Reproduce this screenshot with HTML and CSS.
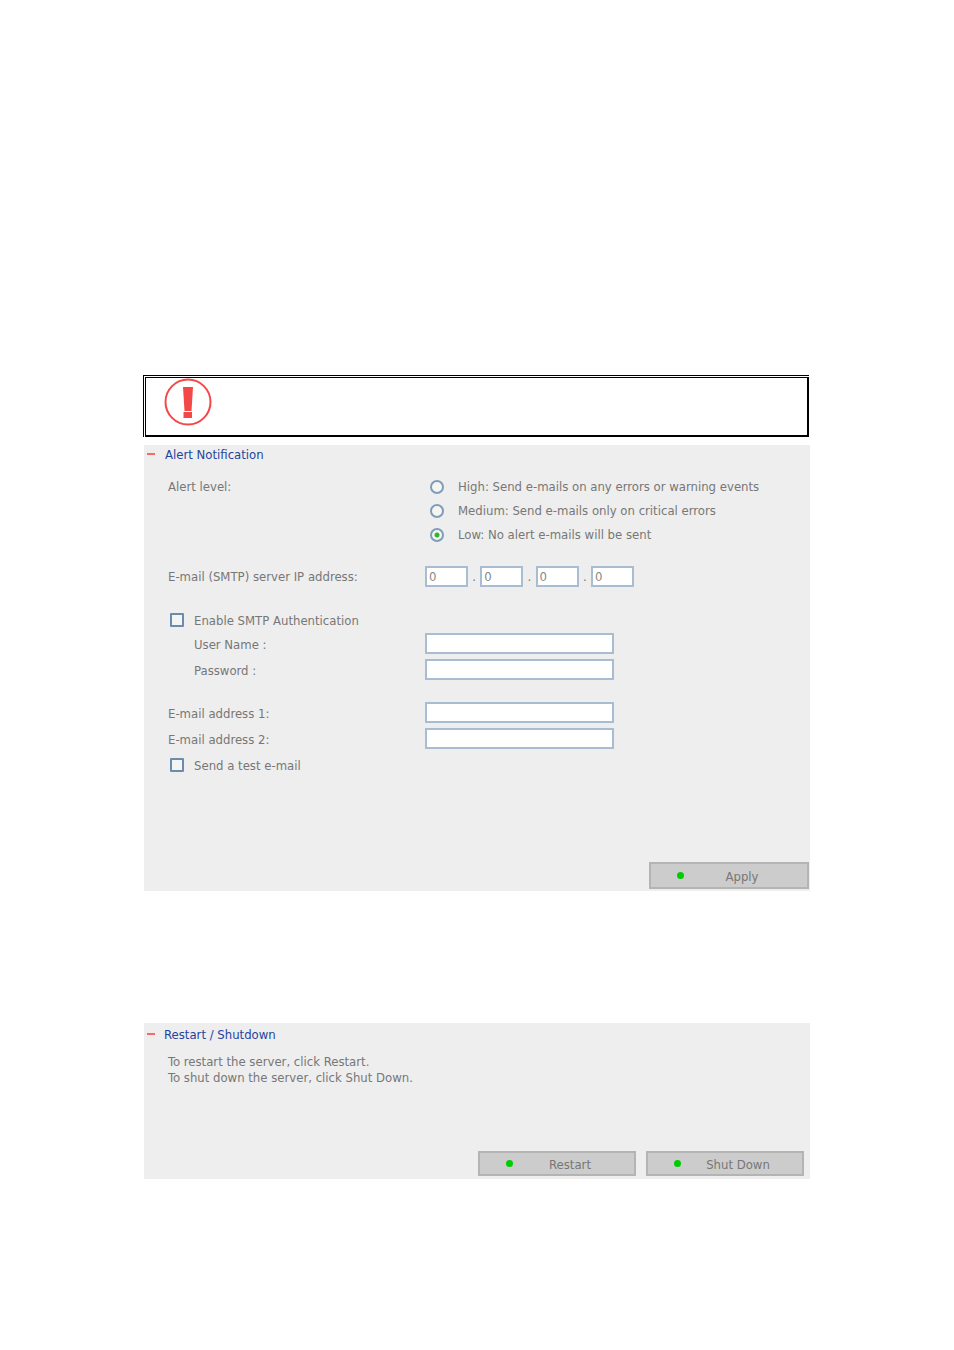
FILE: index.html
```html
<!DOCTYPE html>
<html lang="en">
<head>
    <meta charset="UTF-8">
    <title>Alert Notification</title>
    <link rel="stylesheet" href="styles.css">
</head>
<body>
    <div class="warning-box">
        <div class="warning-inner">
            <svg class="warning-icon" width="48" height="48" viewBox="0 0 48 48">
                <circle cx="24" cy="24" r="22.5" fill="none" stroke="#f44848" stroke-width="2"/>
                <path d="M19 9 H29 L27.5 33 H20.5 Z" fill="#f44848"/>
                <rect x="19.5" y="34" width="8.5" height="6" fill="#f44848"/>
            </svg>
        </div>
    </div>

    <section class="panel panel-alert">
        <h2 class="panel-title"><span class="minus"></span>Alert Notification</h2>

        <div class="row row-level">
            <div class="label">Alert level:</div>
            <div class="radio-list">
                <label class="radio-item"><input type="radio" name="level">High: Send e-mails on any errors or warning events</label>
                <label class="radio-item"><input type="radio" name="level">Medium: Send e-mails only on critical errors</label>
                <label class="radio-item"><input type="radio" name="level" checked>Low: No alert e-mails will be sent</label>
            </div>
        </div>

        <div class="row row-ip">
            <div class="label">E-mail (SMTP) server IP address:</div>
            <div class="ip-fields">
                <input type="text" class="ip-input" value="0"><span class="dot">.</span>
                <input type="text" class="ip-input" value="0"><span class="dot">.</span>
                <input type="text" class="ip-input" value="0"><span class="dot">.</span>
                <input type="text" class="ip-input" value="0">
            </div>
        </div>

        <label class="check-item check-smtp"><input type="checkbox">Enable SMTP Authentication</label>
        <div class="row row-field row-user">
            <div class="label label-sub">User Name :</div>
            <input type="text" class="text-input">
        </div>
        <div class="row row-field">
            <div class="label label-sub">Password :</div>
            <input type="text" class="text-input">
        </div>

        <div class="row row-field row-mail">
            <div class="label">E-mail address 1:</div>
            <input type="text" class="text-input">
        </div>
        <div class="row row-field">
            <div class="label">E-mail address 2:</div>
            <input type="text" class="text-input">
        </div>
        <label class="check-item check-test"><input type="checkbox">Send a test e-mail</label>

        <div class="panel-actions actions-apply">
            <button class="action-button button-wide"><span class="led"></span><span class="button-text">Apply</span></button>
        </div>
    </section>

    <section class="panel panel-restart">
        <h2 class="panel-title title-restart"><span class="minus"></span>Restart / Shutdown</h2>
        <p class="panel-text">To restart the server, click Restart.<br>To shut down the server, click Shut Down.</p>
        <div class="panel-actions actions-restart">
            <button class="action-button"><span class="led"></span><span class="button-text">Restart</span></button>
            <button class="action-button"><span class="led"></span><span class="button-text">Shut Down</span></button>
        </div>
    </section>
</body>
</html>
```

FILE: styles.css
```css
* {
    box-sizing: border-box;
}

body {
    margin: 0;
    padding: 375px 0 0 143px;
    background-color: #fff;
    color: #777;
    font-family: 'DejaVu Sans', 'Liberation Sans', sans-serif;
    font-stretch: condensed;
    font-size: 13px;
}

.warning-box {
    width: 666px;
    height: 62px;
    border: solid #000;
    border-width: 1px 0 0 1px;
    padding: 1px 0 0 1px;
}

.warning-inner {
    height: 100%;
    border: solid #000;
    border-width: 1px 2px 2px 1px;
    padding: 0 0 0 18px;
}

.warning-icon {
    display: block;
}

.panel {
    width: 666px;
    margin-left: 1px;
    background-color: #eee;
    display: flex;
    flex-direction: column;
}

.panel-alert {
    height: 446px;
    margin-top: 8px;
}

.panel-restart {
    height: 156px;
    margin-top: 132px;
}

.panel-title {
    display: flex;
    align-items: center;
    height: 18px;
    margin: 0;
    color: #1f44a0;
    font-size: 13px;
    font-weight: normal;
    padding-left: 3px;
}

.title-restart {
    margin-top: 2px;
}

.minus {
    display: block;
    width: 8px;
    height: 2px;
    background-color: #f66;
    margin-right: 10px;
}

.title-restart .minus {
    margin-right: 9px;
}

.row {
    display: flex;
    padding-left: 24px;
}

.label {
    width: 257px;
    flex: none;
}

.label-sub {
    padding-left: 26px;
}

.row-level {
    margin-top: 14px;
}

.radio-list {
    display: flex;
    flex-direction: column;
    gap: 6px;
}

.radio-item {
    display: flex;
    align-items: center;
    height: 18px;
    padding-left: 5px;
}

.row-level .label {
    padding-top: 1px;
    line-height: 18px;
}

input[type="radio"],
input[type="checkbox"] {
    appearance: none;
    flex: none;
    margin: 0;
    width: 14px;
    height: 14px;
    border: 2px solid #6b8cae;
    background-color: #f4f4f0;
}

input[type="radio"] {
    border-color: #7f9dba;
    border-radius: 50%;
    margin: 2px 14px 0 0;
}

input[type="radio"]:checked {
    background: radial-gradient(circle, #2fb52f 0, #2fb52f 2px, #f4f4f0 3px);
}

input[type="checkbox"] {
    border-radius: 1px;
    margin-right: 10px;
}

.row-ip {
    margin-top: 23px;
    align-items: center;
}

.ip-fields {
    display: flex;
    align-items: center;
}

.dot {
    width: 12.3px;
    text-align: center;
}

.ip-input,
.text-input {
    display: block;
    height: 21px;
    padding: 0 2px;
    border: 2px solid #a8bdd2;
    background-color: #fff;
    color: #888;
    font-family: inherit;
    font-stretch: inherit;
    font-size: 13px;
    outline: none;
}

.ip-input {
    width: 43px;
}

.text-input {
    width: 189px;
}

.check-item {
    display: flex;
    align-items: center;
    height: 18px;
    padding-left: 26px;
}

.check-smtp {
    margin-top: 24px;
}

.row-field {
    align-items: center;
    margin-top: 5px;
}

.row-field .label {
    padding-top: 2px;
}

.row-user {
    margin-top: 4px;
}

.row-mail {
    margin-top: 22px;
}

.check-test {
    margin-top: 7px;
}

.panel-actions {
    margin-top: auto;
    display: flex;
    justify-content: flex-end;
}

.actions-apply {
    padding: 0 1px 2px 0;
}

.actions-restart {
    gap: 10px;
    padding: 0 6px 3px 0;
}

.action-button {
    display: flex;
    align-items: center;
    width: 158px;
    height: 25px;
    padding: 0 7px 0 26px;
    border: 2px solid #b4b4b4;
    background-color: #ccc;
    color: #777;
    font-family: inherit;
    font-stretch: inherit;
    font-size: 13px;
}

.button-wide {
    width: 160px;
    height: 27px;
}

.led {
    flex: none;
    width: 7px;
    height: 7px;
    border-radius: 50%;
    background-color: #0c0;
}

.button-text {
    flex: 1;
    padding-top: 1px;
    text-align: center;
}

.panel-text {
    margin: 11px 0 0 24px;
    line-height: 16px;
}
```
